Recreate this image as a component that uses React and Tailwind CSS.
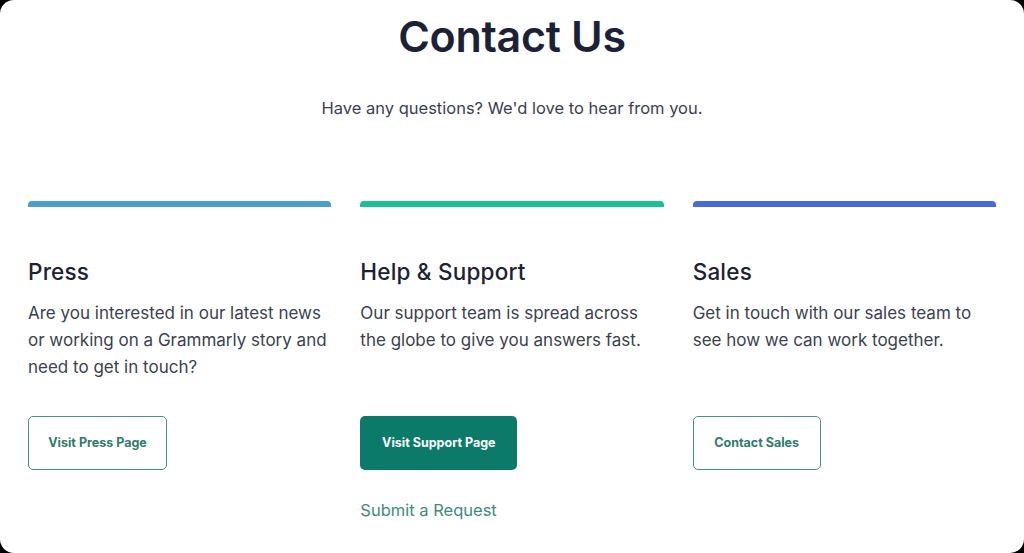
const cards = [
  {
    title: "Press",
    text: "Are you interested in our latest news or working on a Grammarly story and need to get in touch?",
    bar: "bg-[#4b9fc9]",
    button: "Visit Press Page",
    btnWidth: "w-[139px]",
    filled: false,
  },
  {
    title: "Help & Support",
    text: "Our support team is spread across the globe to give you answers fast.",
    bar: "bg-[#1ebf94]",
    button: "Visit Support Page",
    btnWidth: "w-[157px]",
    filled: true,
    link: "Submit a Request",
  },
  {
    title: "Sales",
    text: "Get in touch with our sales team to see how we can work together.",
    bar: "bg-[#4a6bd6]",
    button: "Contact Sales",
    btnWidth: "w-[128px]",
    filled: false,
  },
];

export default function App() {
  return (
    <div className="w-full h-[553px] bg-black" style={{ fontFamily: "Inter, 'Open Sans', sans-serif" }}>
      <div className="h-full bg-white rounded-[14px] overflow-hidden px-[28px]">
        <h1 className="pt-[8px] text-center text-[43px] leading-[56px] font-semibold tracking-[-0.3px] text-[#1d2136]">
          Contact Us
        </h1>
        <p className="mt-[31px] text-center text-[16.5px] leading-[27px] text-[#3b3f51]">
          Have any questions? We'd love to hear from you.
        </p>

        <div className="mt-[79px] grid grid-cols-3 gap-x-[29px]">
          {cards.map((c) => (
            <div key={c.title} className="flex flex-col">
              <div className={`h-[6px] rounded-t-[4px] ${c.bar}`} />
              <h2 className="mt-[51px] text-[22.5px] leading-[28px] font-medium tracking-[0.2px] text-[#1d2136]">{c.title}</h2>
              <p className="mt-[14px] min-h-[81px] text-[17px] leading-[27px] text-[#3b3f51] pr-1">{c.text}</p>
              <div className="mt-[35px]">
                {c.filled ? (
                  <button
                    className={`${c.btnWidth} h-[54px] rounded-[5px] bg-[#0b7a69] text-white text-[12.5px] font-bold`}
                  >
                    {c.button}
                  </button>
                ) : (
                  <button
                    className={`${c.btnWidth} h-[54px] rounded-[5px] border border-[#4c8f86] bg-white text-[#2f7a6e] text-[12.5px] font-bold`}
                  >
                    {c.button}
                  </button>
                )}
              </div>
              {c.link && (
                <a className="mt-[27px] text-[16.5px] leading-[27px] text-[#3e8a7e]">{c.link}</a>
              )}
            </div>
          ))}
        </div>
      </div>
    </div>
  );
}
